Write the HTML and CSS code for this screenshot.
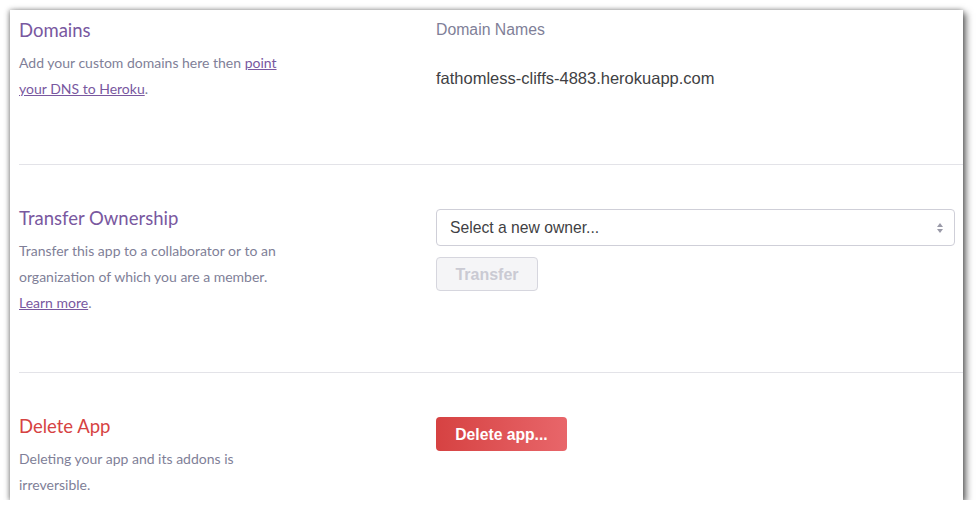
FILE: index.html
```html
<!DOCTYPE html>
<html>
<head>
<meta charset="utf-8">
<link rel="stylesheet" href="styles.css">
</head>
<body>
<div class="panel">
  <section class="row row-first">
    <div class="info">
      <h2 class="title">Domains</h2>
      <p class="desc">Add your custom domains here then <a href="#">point<br>your DNS to Heroku</a>.</p>
    </div>
    <div class="control">
      <div class="label">Domain Names</div>
      <div class="domain">fathomless-cliffs-4883.herokuapp.com</div>
    </div>
  </section>
  <section class="row row-mid">
    <div class="info">
      <h2 class="title">Transfer Ownership</h2>
      <p class="desc">Transfer this app to a collaborator or to an<br>organization of which you are a member.<br><a href="#">Learn more</a>.</p>
    </div>
    <div class="control">
      <div class="select">
        <span>Select a new owner...</span>
        <svg class="arrows" width="8" height="12" viewBox="0 0 8 12"><path d="M4 1 L7 5 H1 Z M4 11 L7 7 H1 Z" fill="#9a9aa8"/></svg>
      </div>
      <button class="btn btn-disabled">Transfer</button>
    </div>
  </section>
  <section class="row row-last">
    <div class="info">
      <h2 class="title title-danger">Delete App</h2>
      <p class="desc">Deleting your app and its addons is<br>irreversible.</p>
    </div>
    <div class="control">
      <button class="btn btn-danger">Delete app...</button>
    </div>
  </section>
</div>
</body>
</html>
```
FILE: styles.css
```css
* { box-sizing: border-box; }
html, body { margin: 0; padding: 0; background: #fff; }
body { font-family: Lato, "Liberation Sans", sans-serif; }
.panel {
  margin: 10px 0 0 10px;
  width: 953px;
  height: 490px;
  overflow: hidden;
  background: #fff;
  padding-left: 9px;
  box-shadow: 3px 3px 7px rgba(0,0,0,0.6), -1px 0 5px rgba(0,0,0,0.35);
}
.row {
  display: flex;
  border-bottom: 1px solid #e3e3e8;
  padding-top: 41px;
}
.row-first { padding-top: 8px; padding-bottom: 62px; }
.row-mid { padding-bottom: 56px; }
.row-last { border-bottom: none; }
.info { width: 417px; flex: none; }
.control { flex: 1; padding-top: 3px; padding-right: 8px; }
.title {
  margin: 0 0 8px;
  font-size: 18.5px;
  line-height: 24px;
  font-weight: 400;
  color: #79589f;
}
.title-danger { color: #d64242; }
.desc {
  margin: 0;
  font-size: 14px;
  line-height: 26px;
  color: #7f7f98;
}
.desc a { color: #79589f; text-decoration: underline; }
.label {
  margin-top: -3px;
  font-family: "Liberation Sans", Arial, sans-serif;
  font-size: 15.8px;
  line-height: 24px;
  color: #7f7f98;
}
.domain {
  margin-top: 24px;
  font-family: "Liberation Sans", Arial, sans-serif;
  font-size: 16.5px;
  line-height: 24px;
  color: #3f3f44;
}
.select {
  height: 37px;
  border: 1px solid #cfcfd8;
  border-radius: 4px;
  display: flex;
  align-items: center;
  justify-content: space-between;
  padding: 0 10px 0 13px;
  font-family: "Liberation Sans", Arial, sans-serif;
  font-size: 15.7px;
  color: #3f3f44;
}
.btn {
  display: block;
  font-family: "Liberation Sans", Arial, sans-serif;
  font-weight: 700;
  border-radius: 4px;
  padding: 2px 0 0;
}
.btn-disabled {
  margin-top: 11px;
  width: 102px;
  height: 34px;
  background: #f5f5f7;
  border: 1px solid #d6d6de;
  color: #cacad3;
  font-size: 16px;
}
.btn-danger {
  width: 131px;
  height: 34px;
  border: none;
  background: linear-gradient(to right, #d64242, #e8666a);
  color: #fff;
  font-size: 15.7px;
}
```
